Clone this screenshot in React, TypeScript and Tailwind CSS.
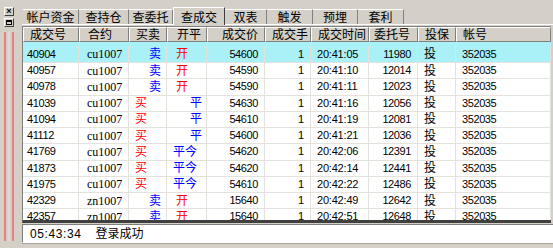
import React from 'react';

type Trade = {
  no: string;
  code: string;
  side: '买' | '卖';
  oc: '开' | '平' | '平今';
  price: string;
  qty: string;
  time: string;
  order: string;
};

const trades: Trade[] = [
  { no: '40904', code: 'cu1007', side: '卖', oc: '开', price: '54600', qty: '1', time: '20:41:05', order: '11980' },
  { no: '40957', code: 'cu1007', side: '卖', oc: '开', price: '54590', qty: '1', time: '20:41:10', order: '12014' },
  { no: '40978', code: 'cu1007', side: '卖', oc: '开', price: '54590', qty: '1', time: '20:41:11', order: '12023' },
  { no: '41039', code: 'cu1007', side: '买', oc: '平', price: '54630', qty: '1', time: '20:41:16', order: '12056' },
  { no: '41094', code: 'cu1007', side: '买', oc: '平', price: '54610', qty: '1', time: '20:41:19', order: '12081' },
  { no: '41112', code: 'cu1007', side: '买', oc: '平', price: '54600', qty: '1', time: '20:41:21', order: '12036' },
  { no: '41769', code: 'cu1007', side: '买', oc: '平今', price: '54620', qty: '1', time: '20:42:06', order: '12391' },
  { no: '41873', code: 'cu1007', side: '买', oc: '平今', price: '54620', qty: '1', time: '20:42:14', order: '12441' },
  { no: '41975', code: 'cu1007', side: '买', oc: '平今', price: '54610', qty: '1', time: '20:42:22', order: '12486' },
  { no: '42329', code: 'zn1007', side: '卖', oc: '开', price: '15640', qty: '1', time: '20:42:49', order: '12642' },
  { no: '42357', code: 'zn1007', side: '卖', oc: '开', price: '15640', qty: '1', time: '20:42:51', order: '12648' },
];

const tabs = ['帐户资金', '查持仓', '查委托', '查成交', '双表', '触发', '预埋', '套利'];
const tabWidths = ['w-[56px]', 'w-[50px]', 'w-[44px]', 'w-[52px]', 'w-[42px]', 'w-[46px]', 'w-[45px]', 'w-[46px]'];

// column widths: 56 50 38 40 58 46 58 49 38 rest
const headers = [
  { label: '成交号', cls: 'w-[56px] pl-[6px]' },
  { label: '合约', cls: 'w-[50px] pl-[8px]' },
  { label: '买卖', cls: 'w-[38px] pl-[6px]' },
  { label: '开平', cls: 'w-[40px] pl-[9px]' },
  { label: '成交价', cls: 'w-[58px] justify-end pr-[6px]' },
  { label: '成交手', cls: 'w-[46px] justify-end pr-[2px]' },
  { label: '成交时间', cls: 'w-[58px] pl-[6px]' },
  { label: '委托号', cls: 'w-[49px] justify-end pr-[7px]' },
  { label: '投保', cls: 'w-[38px] pl-[6px]' },
  { label: '帐号', cls: 'flex-1 pl-[6px]' },
];

const cell = 'flex items-center h-full border-r border-[#e4e2dc] overflow-hidden whitespace-nowrap';

function Row({ t, first }: { t: Trade; first: boolean }) {
  const sell = t.side === '卖';
  return (
    <div
      className={`flex shrink-0 border-b border-[#e4e2dc] ${first ? 'h-[21px] pt-[4px] bg-[#a9f1f7]' : 'h-[16.25px] bg-white'}`}
    >
      <div className={`${cell} w-[56px] pl-[4px] tracking-[-0.4px]`}>{t.no}</div>
      <div className={`${cell} w-[50px] pl-[8px] font-['Liberation_Serif'] text-[12px]`}>{t.code}</div>
      <div
        className={`${cell} w-[38px] text-[12px] ${sell ? 'pl-[20px] text-[#0000ff]' : 'pl-[6px] text-[#ff0000]'}`}
      >
        {t.side}
      </div>
      <div
        className={`${cell} w-[40px] text-[12px] ${
          t.oc === '开' ? 'pl-[9px] text-[#ff0000]' : t.oc === '平' ? 'pl-[23px] text-[#0000ff]' : 'pl-[6px] text-[#0000ff]'
        }`}
      >
        {t.oc}
      </div>
      <div className={`${cell} w-[58px] justify-end pr-[6px] tracking-[-0.4px]`}>{t.price}</div>
      <div className={`${cell} w-[46px] justify-end pr-[6px]`}>{t.qty}</div>
      <div className={`${cell} w-[58px] pl-[6px] tracking-[-0.2px]`}>{t.time}</div>
      <div className={`${cell} w-[49px] justify-end pr-[6px] tracking-[-0.4px]`}>{t.order}</div>
      <div className={`${cell} w-[38px] pl-[6px] text-[12px]`}>投</div>
      <div className={`${cell} flex-1 pl-[6px] tracking-[-0.4px]`}>352035</div>
    </div>
  );
}

export default function App() {
  return (
    <div className="w-[553px] h-[248px] bg-[#d4d0c8] flex overflow-hidden text-[11px] text-black font-['Liberation_Sans','Noto_Sans_CJK_SC',sans-serif] leading-none">
      {/* left dock strip */}
      <div className="w-[22px] shrink-0 flex flex-col items-center pt-[7px] pr-[4px]">
        <div className="w-[10px] h-[9px] border border-t-white border-l-white border-r-[#404040] border-b-[#404040] flex items-center justify-center text-[9px] font-bold">
          ×
        </div>
        <div className="w-[10px] h-[9px] mt-[2px] border border-t-white border-l-white border-r-[#404040] border-b-[#404040] flex items-center justify-center">
          <div className="w-[6px] h-[5px] border border-black border-t-2" />
        </div>
        <div className="flex gap-[2px] mt-[5px] h-[209px]">
          <div className="w-[2px] bg-[#e77f7f]" />
          <div className="w-[2px] bg-[#e4d6d2]" />
          <div className="w-[2px] bg-[#e77f7f]" />
        </div>
      </div>

      <div className="flex-1 flex flex-col min-w-0">
        {/* tabs */}
        <div className="h-[25px] shrink-0 flex items-end border-b border-white pl-[1px]">
          {tabs.map((tab, i) =>
            i === 3 ? (
              <div
                key={tab}
                className={`${tabWidths[i]} h-[18px] -mb-px bg-[#d4d0c8] border-l border-t border-white border-r border-r-[#404040] flex items-start justify-center pt-[4px] text-[12px] relative z-10`}
              >
                {tab}
              </div>
            ) : (
              <div
                key={tab}
                className={`${tabWidths[i]} h-[15px] border-t border-white border-r border-r-[#808080] flex items-start justify-center pt-[2px] text-[12px]`}
              >
                {tab}
              </div>
            ),
          )}
        </div>

        {/* trade table */}
        <div className="h-[197px] shrink-0 mt-[1px] mr-[2px] flex flex-col bg-white border-l border-t border-[#808080] border-b-[3px] border-b-[#404040] overflow-hidden">
          <div className="flex h-[15px] shrink-0 bg-[#d4d0c8] text-[12px]">
            {headers.map((h) => (
              <div
                key={h.label}
                className={`${h.cls} flex items-center h-full border-t border-l border-white border-r border-r-[#808080] border-b border-b-[#808080]`}
              >
                {h.label}
              </div>
            ))}
          </div>
          {trades.map((t, i) => (
            <Row key={t.no} t={t} first={i === 0} />
          ))}
        </div>

        {/* status bar */}
        <div className="h-[19px] shrink-0 mt-[1px] bg-white border-t border-l border-[#808080] border-b border-b-white flex items-center pl-[7px] gap-[14px] text-[12px]">
          <span className="tracking-[0.6px]">05:43:34</span>
          <span>登录成功</span>
        </div>
        <div className="flex-1 border-t border-[#a8a49c]" />
      </div>
    </div>
  );
}
